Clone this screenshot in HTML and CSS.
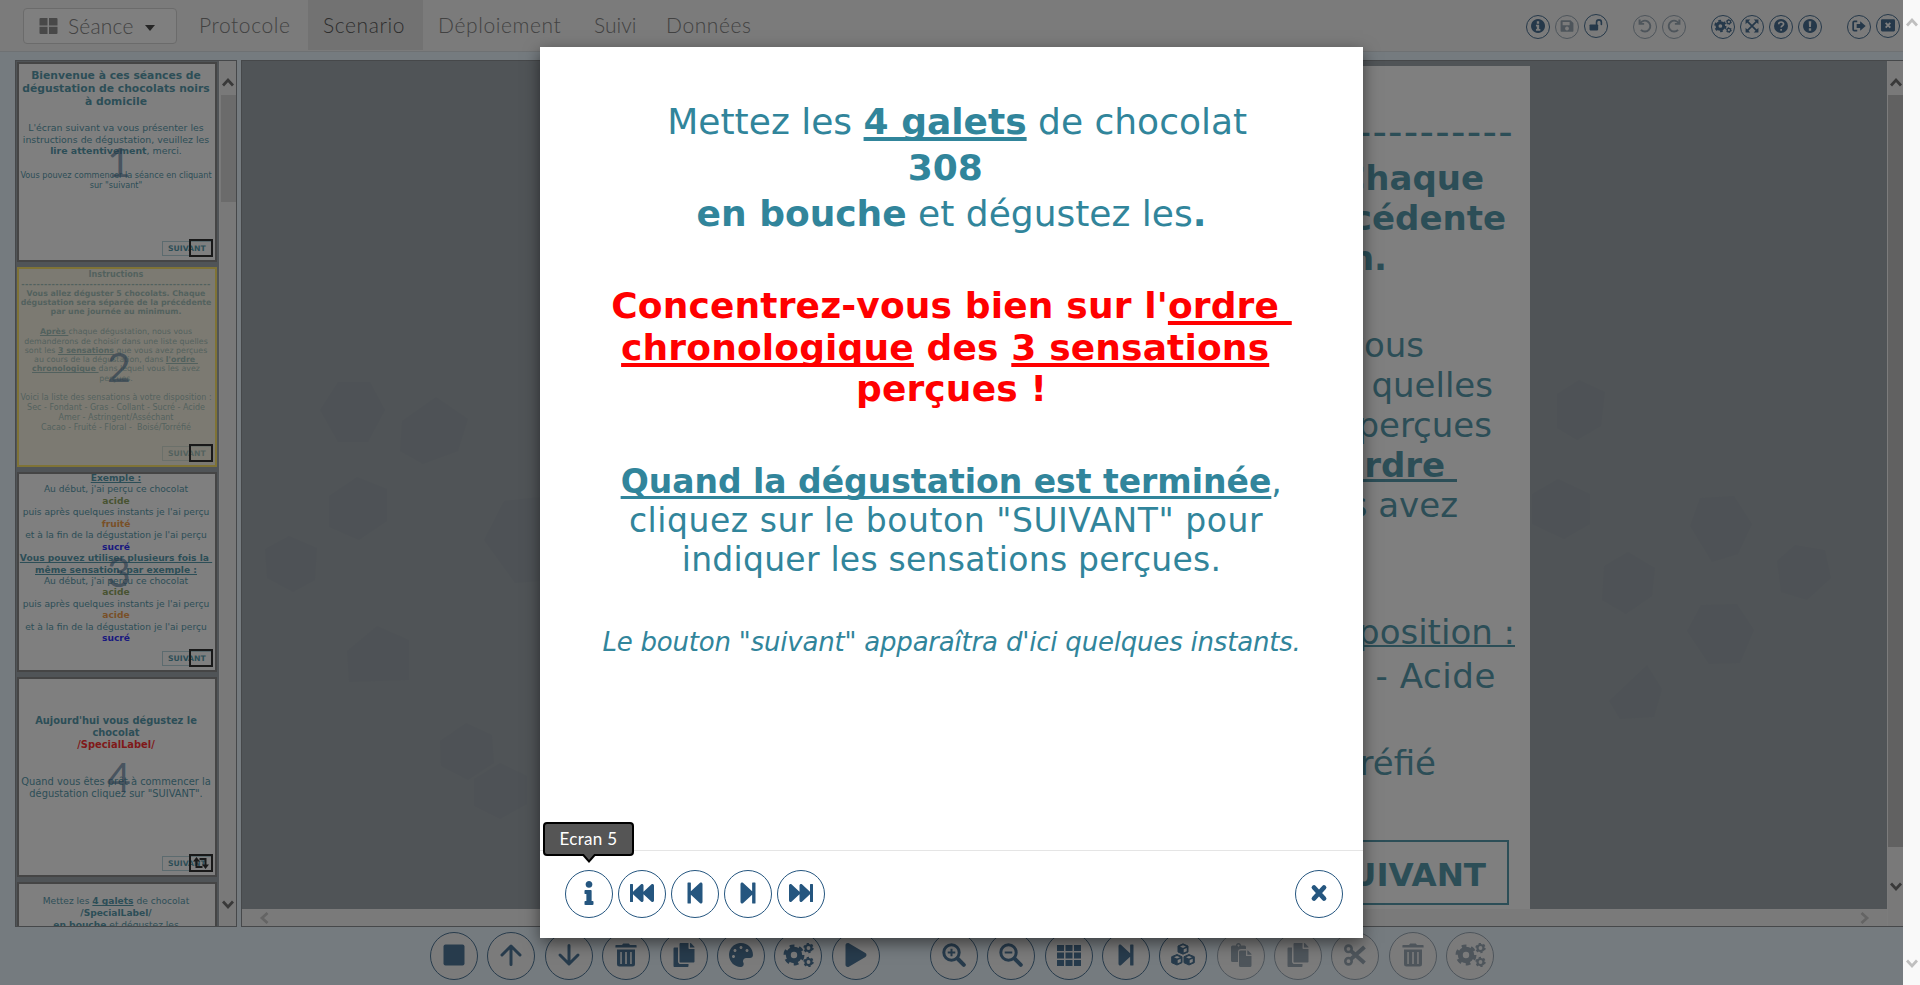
FILE: index.html
```html
<!DOCTYPE html>
<html lang="fr">
<head>
<meta charset="utf-8">
<title>Scenario</title>
<link rel="stylesheet" href="styles.css">
</head>
<body>
<svg class="sprite" aria-hidden="true">
  <symbol id="i-info" viewBox="-160 0 512 512"><path d="M20 424.229h20V279.771H20c-11.046 0-20-8.954-20-20V212c0-11.046 8.954-20 20-20h112c11.046 0 20 8.954 20 20v212.229h20c11.046 0 20 8.954 20 20V492c0 11.046-8.954 20-20 20H20c-11.046 0-20-8.954-20-20v-47.771c0-11.046 8.954-20 20-20zM96 0C56.235 0 24 32.235 24 72s32.235 72 72 72 72-32.235 72-72S135.764 0 96 0z"/></symbol>
  <symbol id="i-next" viewBox="-32 0 512 512"><path d="M384 44v424c0 6.6-5.4 12-12 12h-48c-6.6 0-12-5.4-12-12V291.600l-195.500 181C95.900 489.700 64 475.400 64 448V64c0-27.400 31.900-41.700 52.500-24.600L312 219.300V44c0-6.600 5.400-12 12-12h48c6.600 0 12 5.400 12 12z"/></symbol>
  <symbol id="i-last" viewBox="0 0 512 512"><path d="M512 76v360c0 6.600-5.400 12-12 12h-40c-6.600 0-12-5.400-12-12V284.100L276.500 440.600c-20.600 17.200-52.500 2.800-52.500-24.600V284.100L52.500 440.600C31.900 457.800 0 443.400 0 416V96c0-27.400 31.900-41.700 52.500-24.600L224 226.800V96c0-27.400 31.900-41.700 52.500-24.600L448 226.800V76c0-6.600 5.400-12 12-12h40c6.600 0 12 5.400 12 12z"/></symbol>
  <symbol id="i-close" viewBox="0 0 24 24"><path d="M7 6.500l10 11M17 6.500L7 17.500" fill="none" stroke="currentColor" stroke-width="4.800" stroke-linecap="round"/></symbol>
  <symbol id="i-stop" viewBox="0 0 24 24"><rect x="1.500" y="1.500" width="21" height="21" rx="2"/></symbol>
  <symbol id="i-up" viewBox="0 0 24 24"><path d="M12 21.500V3.500M3 12l9-9 9 9" fill="none" stroke="currentColor" stroke-width="3" stroke-linecap="round" stroke-linejoin="round"/></symbol>
  <symbol id="i-trash" viewBox="0 0 24 24"><path fill-rule="evenodd" d="M2 2h6l1.200-1.600h5.600L16 2h6a.6.600 0 0 1 .6.600v1.800H1.400V2.600A.6.600 0 0 1 2 2zM3 6.500h18V21a2.500 2.500 0 0 1-2.500 2.500h-13A2.500 2.500 0 0 1 3 21zM6.300 9v12h1.500V9zm4.900 0v12h1.600V9zm5 0v12h1.500V9z"/></symbol>
  <symbol id="i-copy" viewBox="-32 0 512 512"><path d="M320 448v40c0 13.255-10.745 24-24 24H24c-13.255 0-24-10.745-24-24V120c0-13.255 10.745-24 24-24h72v296c0 30.879 25.121 56 56 56h168zm0-344V0H152c-13.255 0-24 10.745-24 24v368c0 13.255 10.745 24 24 24h272c13.255 0 24-10.745 24-24V128H344c-13.200 0-24-10.800-24-24zm120.971-31.029L375.029 7.029A24 24 0 0 0 358.059 0H352v96h96v-6.059a24 24 0 0 0-7.029-16.970z"/></symbol>
  <symbol id="i-palette" viewBox="0 0 512 512"><path d="M204.300 5C104.900 24.400 24.800 104.300 5.200 203.400c-37 187 131.700 326.400 258.800 306.700 41.200-6.400 61.400-54.600 42.500-91.700-23.100-45.400 9.900-98.400 60.900-98.400h79.700c35.800 0 64.800-29.600 64.900-65.300C511.500 97.100 368.100-26.900 204.300 5zM96 320c-17.700 0-32-14.300-32-32s14.300-32 32-32 32 14.300 32 32-14.300 32-32 32zm32-128c-17.700 0-32-14.300-32-32s14.300-32 32-32 32 14.300 32 32-14.300 32-32 32zm128-64c-17.700 0-32-14.300-32-32s14.300-32 32-32 32 14.300 32 32-14.300 32-32 32zm128 64c-17.700 0-32-14.300-32-32s14.300-32 32-32 32 14.300 32 32-14.300 32-32 32z"/></symbol>
  <symbol id="i-cogs" viewBox="0 0 30 24"><g fill="none" stroke="currentColor">
    <circle cx="10.500" cy="12" r="5.700" stroke-width="5"/>
    <circle cx="10.500" cy="12" r="8.900" stroke-width="3.200" stroke-dasharray="4.700 4.619" stroke-dashoffset="-2.300" transform="rotate(-14 10.500 12)"/>
    <circle cx="25" cy="5" r="3" stroke-width="2.200"/><circle cx="25" cy="5" r="4.400" stroke-width="1.600" stroke-dasharray="2.300 2.307"/>
    <circle cx="25" cy="19" r="3" stroke-width="2.200"/><circle cx="25" cy="19" r="4.400" stroke-width="1.600" stroke-dasharray="2.300 2.307"/></g></symbol>
  <symbol id="i-play" viewBox="-32 0 512 512"><path d="M424.400 214.700L72.400 6.600C43.800-10.300 0 6.100 0 47.900V464c0 37.500 40.700 60.100 72.400 41.300l352-208c31.400-18.500 31.500-64.100 0-82.600z"/></symbol>
  <symbol id="i-zoomin" viewBox="0 0 24 24"><g fill="none" stroke="currentColor"><circle cx="9.500" cy="9.500" r="7.700" stroke-width="3"/><path d="M15.500 15.500l6.300 6.300" stroke-width="4" stroke-linecap="round"/><path d="M9.500 5.700v7.600M5.700 9.500h7.600" stroke-width="2"/></g></symbol>
  <symbol id="i-zoomout" viewBox="0 0 24 24"><g fill="none" stroke="currentColor"><circle cx="9.500" cy="9.500" r="7.700" stroke-width="3"/><path d="M15.500 15.500l6.300 6.300" stroke-width="4" stroke-linecap="round"/><path d="M5.700 9.500h7.600" stroke-width="2"/></g></symbol>
  <symbol id="i-grid" viewBox="0 0 24 24"><path d="M0 2h7v6H0zm8.500 0h7v6h-7zM17 2h7v6h-7zM0 9.500h7v6H0zm8.500 0h7v6h-7zm8.500 0h7v6h-7zM0 17h7v6H0zm8.500 0h7v6h-7zm8.500 0h7v6h-7z"/></symbol>
  <symbol id="i-cubes" viewBox="0 0 24 24"><g stroke="currentColor" stroke-width="1" stroke-linejoin="round"><path d="M12 .8l5 2.200v6l-5 2.200L7 9V3zM6 11.500l5 2.200v6L6 22l-5.300-2.300v-6zM18 11.500l5.300 2.200v6L18 22l-5-2.300v-6z"/></g><path class="cut" d="M12 2.300l3 1.300-3 1.300-3-1.300zM12.700 6.200l3-1.300v3.400l-3 1.300zM6 13l3 1.300-3 1.300-3-1.300zM6.700 17l3-1.300V19l-3 1.300zM18 13l3 1.300-3 1.300-3-1.300zM18.700 17l3-1.300V19l-3 1.300z"/></symbol>
  <symbol id="i-paste" viewBox="0 0 24 24"><path fill-rule="evenodd" d="M3.500 2.500H7a2.500 2.500 0 0 1 5 0h3.500A1.500 1.500 0 0 1 17 4v2h-5a3 3 0 0 0-3 3v10H3.500A1.500 1.500 0 0 1 2 17.500V4a1.500 1.500 0 0 1 1.500-1.500zM9.500 1.500a1 1 0 1 0 .01 0zM11.500 7.500H17V13h5.500v9.500a1.500 1.500 0 0 1-1.500 1.500h-9.500a1.500 1.500 0 0 1-1.500-1.500V9a1.500 1.500 0 0 1 1.500-1.500zM18.300 7.500h.7l3.500 3.500v.8h-4.200z"/></symbol>
  <symbol id="i-cut" viewBox="0 0 24 24"><g fill="none" stroke="currentColor"><circle cx="5.500" cy="5.800" r="3.200" stroke-width="2.600"/><circle cx="5.500" cy="18.200" r="3.200" stroke-width="2.600"/><path d="M8 8l13.500 12M8 16L21.500 4" stroke-width="4"/></g></symbol>
  <symbol id="i-infoc" viewBox="0 0 24 24"><path fill-rule="evenodd" d="M12 0a12 12 0 1 0 .01 0zM10 4h4v4h-4zM8.500 10H14v7h2v3H8.500v-3H10v-4H8.500z"/></symbol>
  <symbol id="i-qc" viewBox="0 0 24 24"><circle cx="12" cy="12" r="12"/><path class="cutline" d="M8 9c0-5 8.500-5 8.500-.3 0 3-4.300 2.800-4.300 6M12.200 17v3" stroke-width="2.800"/></symbol>
  <symbol id="i-exc" viewBox="0 0 24 24"><path fill-rule="evenodd" d="M12 0a12 12 0 1 0 .01 0zM9.800 4h4.400l-.6 9.500h-3.200zM10 16h4v4h-4z"/></symbol>
  <symbol id="i-save" viewBox="0 0 24 24"><path fill-rule="evenodd" d="M3 2h15l5 5v13a2 2 0 0 1-2 2H3a2 2 0 0 1-2-2V4a2 2 0 0 1 2-2zM4.500 5v5.500h12V5zM12 13a3.300 3.300 0 1 0 .01 0z"/></symbol>
  <symbol id="i-unlock" viewBox="0 0 26 24"><rect x="1" y="11" width="16" height="11" rx="1.500"/><path d="M14 11V7a4.500 4.500 0 0 1 9 0v4" fill="none" stroke="currentColor" stroke-width="3" stroke-linecap="round"/></symbol>
  <symbol id="i-undo" viewBox="0 0 24 24"><path d="M3.500 8A9.300 9.300 0 1 1 5 18.500" fill="none" stroke="currentColor" stroke-width="3.300"/><path d="M1 1v9h9.500V7H4.500V1z"/></symbol>
  <symbol id="i-expand" viewBox="0 0 24 24"><path d="M4 4l16 16M20 4L4 20" fill="none" stroke="currentColor" stroke-width="3"/><path d="M1 1h8L1 9zM23 1v8l-8-8zM1 23v-8l8 8zM23 23h-8l8-8z"/></symbol>
  <symbol id="i-out" viewBox="0 0 24 24"><path d="M9 4H4a2 2 0 0 0-2 2v12a2 2 0 0 0 2 2h5" fill="none" stroke="currentColor" stroke-width="3"/><path d="M8 8.500h6V4l9.500 8-9.500 8v-4.500H8z"/></symbol>
  <symbol id="i-xbox" viewBox="0 0 24 24"><rect x="0" y="2" width="24" height="21" rx="2"/><path class="cutline" d="M8 8.500l8 8M16 8.500l-8 8" stroke-width="3.200"/></symbol>
  <symbol id="i-squares" viewBox="0 0 18 16"><path d="M1 0h7v7.500H0V1a1 1 0 0 1 1-1zM9.500 0H17a1 1 0 0 1 1 1v6.500H9.500zM0 8.700h8V16H1a1 1 0 0 1-1-1zM9.500 8.700H18V15a1 1 0 0 1-1 1H9.500z"/></symbol>
  <symbol id="i-chev" viewBox="0 0 12 10"><path d="M1 8.500l5-5.500 5 5.500" fill="none" stroke="currentColor" stroke-width="2.800"/></symbol>
  <symbol id="i-loop" viewBox="0 0 16 12"><path d="M3.500 3v7h6M6.500 2h6v6" fill="none" stroke="currentColor" stroke-width="2"/><path d="M0 4.500L3.500 0 7 4.500zM9 7.500l3.500 4.500L16 7.500z"/></symbol>
</svg>

<div class="app">
  <header class="nav">
    <div class="dropdown"><svg class="squares"><use href="#i-squares"/></svg><span>Séance</span><i class="caret"></i></div>
    <nav class="tabs">
      <a class="tab t1">Protocole</a><a class="tab t2 active">Scenario</a><a class="tab t3">Déploiement</a><a class="tab t4">Suivi</a><a class="tab t5">Données</a>
    </nav>
    <div class="actions">
      <div class="group"><b class="mini"><svg><use href="#i-infoc"/></svg></b><b class="mini off"><svg><use href="#i-save"/></svg></b><b class="mini raised"><svg><use href="#i-unlock"/></svg></b></div>
      <div class="group"><b class="mini off"><svg><use href="#i-undo"/></svg></b><b class="mini off flip"><svg><use href="#i-undo"/></svg></b></div>
      <div class="group"><b class="mini wide"><svg><use href="#i-cogs"/></svg></b><b class="mini"><svg><use href="#i-expand"/></svg></b><b class="mini"><svg><use href="#i-qc"/></svg></b><b class="mini"><svg><use href="#i-exc"/></svg></b></div>
      <div class="group"><b class="mini"><svg><use href="#i-out"/></svg></b><b class="mini raised"><svg><use href="#i-xbox"/></svg></b></div>
    </div>
  </header>

  <main class="work">
    <aside class="side">
      <div class="thumbs">
        <section class="thumb s1">
          <p class="a"><b>Bienvenue à ces séances de<br>dégustation de chocolats noirs<br>à domicile</b></p>
          <p class="b">L'écran suivant va vous présenter les<br>instructions de dégustation, veuillez les<br><b>lire attentivement</b>, merci.</p>
          <p class="c">Vous pouvez commencer la séance en cliquant<br>sur "suivant"</p>
          <span class="num">1</span><span class="go">SUIVANT</span><span class="mark"></span>
        </section>
        <section class="thumb s2">
          <p class="a"><b>Instructions</b><br><b class="dash">--------------------------------------------------</b></p>
          <p class="b"><b>Vous allez déguster 5 chocolats. Chaque<br>dégustation sera séparée de la précédente<br>par une journée au minimum.</b></p>
          <p class="c"><b><u>Après&nbsp;</u></b>chaque dégustation, nous vous<br>demanderons de choisir dans une liste quelles<br>sont les <b><u>3 sensations</u></b> que vous avez perçues<br>au cours de la dégustation, dans <b><u>l'ordre&nbsp;</u></b><br><b><u>chronologique&nbsp;</u></b>dans lequel vous les avez<br>perçues.</p>
          <p class="d">Voici la liste des sensations à votre disposition :<br>Sec - Fondant - Gras - Collant - Sucré - Acide<br>Amer - Astringent/Asséchant<br>Cacao - Fruité - Floral -&nbsp; Boisé/Torréfié</p>
          <span class="go">SUIVANT</span><span class="veil"></span><span class="num">2</span><span class="mark"></span>
        </section>
        <section class="thumb s3">
          <p><b><u>Exemple :</u></b><br>Au début, j'ai perçu ce chocolat<br><b class="green">acide</b><br>puis après quelques instants je l'ai perçu<br><b class="orange">fruité</b><br>et à la fin de la dégustation je l'ai perçu<br><b class="blue">sucré</b><br><b><u>Vous pouvez utiliser plusieurs fois la&nbsp;</u><br><u>même sensation, par exemple :</u></b><br>Au début, j'ai perçu ce chocolat<br><b class="green">acide</b><br>puis après quelques instants je l'ai perçu<br><b class="orange">acide</b><br>et à la fin de la dégustation je l'ai perçu<br><b class="blue">sucré</b></p>
          <span class="num">3</span><span class="go">SUIVANT</span><span class="mark"></span>
        </section>
        <section class="thumb s4">
          <p class="a"><b>Aujourd'hui vous dégustez le<br>chocolat<br><span class="red">/SpecialLabel/</span></b></p>
          <p class="b">Quand vous êtes prêt à commencer la<br>dégustation cliquez sur "SUIVANT".</p>
          <span class="num">4</span><span class="go">SUIVANT</span><span class="mark"><svg><use href="#i-loop"/></svg></span>
        </section>
        <section class="thumb s5">
          <p>Mettez les <b><u>4 galets</u></b> de chocolat<br><b>/SpecialLabel/<br>en bouche</b> et dégustez les</p>
        </section>
      </div>
      <div class="vbar"><svg class="arrow up"><use href="#i-chev"/></svg><i class="grip"></i><svg class="arrow down"><use href="#i-chev"/></svg></div>
    </aside>

    <section class="stage">
      <svg class="texture" viewBox="0 0 1645 848">
        <path d="M78 349l18-28h32l15 28-17 32H96zM87 435l28-19 30 12v32l-28 19-30-13zM160 360l34-24 32 22-10 32-35 13-23-13zM242 479l20-39 36-4v84l-25 2zM23 488l24-13 28 12-2 32-22 12-26-14zM198 680l26-18 26 12 2 28-26 17-27-14zM232 718l26-16 27 13v28l-27 15-26-13zM105 590l30-25 32 14v40l-60 2z"/>
        <path d="M1315 333l22-14 26 12-4 34-24 14-20-12zM1290 433l26-15 32 15v30l-26 15-32-15zM1448 465l10-28 34-2 18 28-14 30-26 8zM1362 505l24-14 27 16-3 28-26 18-24-14zM1535 500l18-16 30 5 6 28-24 22-26-8zM1445 570l14-26 36-1 17 26-14 33-31 1zM1367 640l38-36 15 24-8 28-34 2z"/>
      </svg>
      <div class="slide">
        <p class="head"><b>Instructions</b></p>
        <p class="dashes">--------------------------------------------------</p>
        <p class="intro"><b><span class="e47">Vous allez déguster 5 chocolats. Chaque</span><span class="e25">dégustation sera séparée de la précédente</span><span class="e146">par une journée au minimum.</span></b></p>
        <p class="ask"><span class="e107"><b><u>Après&nbsp;</u></b>chaque dégustation, nous vous</span><span class="e37">demanderons de choisir dans une liste quelles</span><span class="e39">sont les <b><u>3 sensations</u></b> que vous avez perçues</span><span class="e73">au cours de la dégustation, dans <b><u>l'ordre&nbsp;</u></b></span><span class="e72"><b><u>chronologique&nbsp;</u></b>dans lequel vous les avez</span><span class="e300">perçues.</span></p>
        <p class="list"><span class="e15"><u>Voici la liste des sensations à votre disposition :</u></span><span class="e35">Sec - Fondant - Gras - Collant - Sucré - Acide</span><span class="e180">Amer - Astringent/Asséchant</span><span class="e95">Cacao - Fruité - Floral -&nbsp; Boisé/Torréfié</span></p>
        <div class="next">SUIVANT</div>
      </div>
      <div class="hbar"><svg class="arrow left"><use href="#i-chev"/></svg><svg class="arrow right"><use href="#i-chev"/></svg></div>
      <div class="vbar big"><svg class="arrow up"><use href="#i-chev"/></svg><i class="grip"></i><svg class="arrow down"><use href="#i-chev"/></svg></div>
    </section>
  </main>

  <footer class="tools">
    <div class="set">
      <b class="round"><svg><use href="#i-stop"/></svg></b><b class="round"><svg><use href="#i-up"/></svg></b><b class="round turn"><svg><use href="#i-up"/></svg></b><b class="round"><svg><use href="#i-trash"/></svg></b><b class="round"><svg><use href="#i-copy"/></svg></b><b class="round"><svg><use href="#i-palette"/></svg></b><b class="round wide"><svg><use href="#i-cogs"/></svg></b><b class="round"><svg><use href="#i-play"/></svg></b>
    </div>
    <div class="set">
      <b class="round"><svg><use href="#i-zoomin"/></svg></b><b class="round"><svg><use href="#i-zoomout"/></svg></b><b class="round"><svg><use href="#i-grid"/></svg></b><b class="round"><svg><use href="#i-next"/></svg></b><b class="round"><svg><use href="#i-cubes"/></svg></b><b class="round off"><svg><use href="#i-paste"/></svg></b><b class="round off"><svg><use href="#i-copy"/></svg></b><b class="round off"><svg><use href="#i-cut"/></svg></b><b class="round off"><svg><use href="#i-trash"/></svg></b><b class="round off wide"><svg><use href="#i-cogs"/></svg></b>
    </div>
  </footer>

  <div class="overlay"></div>

  <div class="modal">
    <div class="body">
      <p class="lead">&nbsp;Mettez les <b><u>4 galets</u></b> de chocolat<br><b>308&nbsp;</b><br><b>en bouche</b> et dégustez les<b>.</b></p>
      <p class="warn">Concentrez-vous bien sur l'<u>ordre&nbsp;</u><br><u>chronologique</u> des <u>3 sensations</u>&nbsp;<br>perçues !</p>
      <p class="done"><b><u>Quand la dégustation est terminée</u></b>,<br>cliquez sur le bouton "SUIVANT" pour&nbsp;<br><span class="tight">indiquer les sensations perçues.</span></p>
      <p class="hint">Le bouton "suivant" apparaîtra d'ici quelques instants.</p>
    </div>
    <div class="foot">
      <b class="round">
        <svg><use href="#i-info"/></svg>
        <span class="tip">Ecran 5</span>
      </b>
      <b class="round back"><svg><use href="#i-last"/></svg></b><b class="round back"><svg><use href="#i-next"/></svg></b><b class="round"><svg><use href="#i-next"/></svg></b><b class="round"><svg><use href="#i-last"/></svg></b>
      <b class="round last"><svg><use href="#i-close"/></svg></b>
    </div>
  </div>
</div>
<div class="pagebar"><svg class="arrow up"><use href="#i-chev"/></svg><svg class="arrow down"><use href="#i-chev"/></svg></div>
</body>
</html>
```
FILE: styles.css
```css
* { box-sizing: border-box; }
body { margin: 0; width: 1920px; height: 985px; overflow: hidden; display: flex; background: #fff; font-family: "DejaVu Sans", sans-serif; color: #31859b; }
p { margin: 0; }
svg { display: block; fill: currentColor; overflow: visible; }
.sprite { position: absolute; width: 0; height: 0; }
.cut { fill: #fff; }
.cutline { fill: none; stroke: #fff; }
u { text-decoration-skip-ink: none; }

.app { position: relative; width: 1903px; height: 985px; display: flex; flex-direction: column; background: #e6f4ff; overflow: hidden; }
.overlay { position: absolute; inset: 0; background: rgba(41, 41, 41, .6); }

/* top navigation */
.nav { height: 52px; display: flex; background: #f5f5f5; border-bottom: 1px solid #d4dce2; font-family: Lato, sans-serif; font-size: 21px; color: #666; }
.dropdown { width: 154px; height: 36px; margin: 8px 7px 0 23px; padding-left: 15px; display: flex; align-items: center; background: #fff; border: 1px solid #ccc; border-radius: 4px; letter-spacing: .2px; font-size: 21px; font-weight: 300; }
.squares { width: 19px; height: 16px; margin-right: 10px; color: #777; }
.dropdown span, .tab { position: relative; top: -1px; }
.caret { margin: 3px 0 0 11px; border: 5px solid transparent; border-top: 6px solid #222; border-bottom: 0; }
.tabs { display: flex; height: 50px; }
.tab { top: 0; padding-left: 15px; line-height: 49px; letter-spacing: .6px; font-weight: 300; }
.tab.active { background: #dfdfdf; color: #333; }
.t1 { width: 124px; }
.t2 { width: 115px; }
.t3 { width: 156px; }
.t4 { width: 72px; letter-spacing: 0; }
.t5 { width: 116px; }
.actions { margin-left: auto; padding-right: 3px; display: flex; gap: 25px; height: 54px; color: #1f4f7a; }
.group { display: flex; align-items: center; gap: 5px; }
.mini { width: 24px; height: 24px; border: 1px solid currentColor; border-radius: 50%; display: flex; align-items: center; justify-content: center; }
.mini svg { width: 14px; height: 14px; margin-top: -2px; }
.mini.wide svg { width: 18px; flex: none; }
.mini.raised { margin-bottom: 2px; }
.mini.off, .round.off { color: #8496a6; }
.flip svg { transform: scaleX(-1); }

/* work area */
.work { height: 867px; margin-top: 8px; padding-left: 15px; display: flex; gap: 4px; }
.side { width: 222px; display: flex; background: #8a949c; border: 1px solid #70757a; overflow: hidden; }
.thumbs { width: 203px; height: 865px; padding: 1px 0 0 1px; display: flex; flex-direction: column; gap: 5px; overflow: hidden; }
.thumb { position: relative; flex: none; width: 200px; height: 200px; background: #fff; border: 2px solid #6f6f6f; text-align: center; white-space: nowrap; overflow: hidden; }
.thumb p { margin-left: -11px; margin-right: -9px; }
.s1 .a { margin-top: 5px; font-size: 10.75px; line-height: 13px; }
.s1 .b { margin-top: 14px; font-size: 9.4px; line-height: 11.6px; }
.s1 .c { margin-top: 13px; font-size: 8.15px; line-height: 10px; }
.s2 { border-color: #ffe14a; }
.s2 .a { margin-top: 0; font-size: 8.1px; line-height: 10px; }
.s2 .dash { letter-spacing: .43px; }
.s2 .b { font-size: 7.85px; line-height: 9.1px; }
.s2 .c { margin-top: 11px; font-size: 7.9px; line-height: 9.25px; }
.s2 .d { margin-top: 10px; font-size: 8px; line-height: 10px; }
.s3 p { margin-top: -1px; font-size: 9.15px; line-height: 11.43px; }
.s4 .a { margin-top: 36px; font-size: 9.9px; line-height: 12px; }
.s4 .b { margin-top: 25px; font-size: 9.9px; line-height: 12px; }
.s5 p { margin-top: 11px; font-size: 9.1px; line-height: 12px; }
.green { color: #76923c; }
.orange { color: #f08a24; }
.blue { color: #0000ff; }
.red { color: #ff0000; }
.num { position: absolute; left: 0; right: 0; top: 73px; padding-left: 4px; text-align: center; font: 41px/50px Lato, sans-serif; color: rgba(37, 86, 127, .65); }
.go { position: absolute; left: 143px; top: 177px; width: 51px; height: 15px; padding-left: 5px; border: 1px solid #a9cdd6; background: #fff; font-size: 7.7px; line-height: 14px; font-weight: bold; text-align: left; }
.mark { position: absolute; left: 170px; top: 175px; width: 24px; height: 18px; border: 2px solid #000; color: #000; }
.mark svg { width: 16px; height: 12px; margin: 1px 2px; }
.veil { position: absolute; inset: 0; background: rgba(240, 230, 190, .5); }

.vbar { width: 17px; display: flex; flex-direction: column; align-items: center; background: #f0f0f0; border-left: 1px solid #f8f8f8; }
.arrow { width: 12px; height: 10px; color: #505050; }
.down { transform: rotate(180deg); }
.side .up { margin-top: 16px; }
.side .grip { width: 15px; height: 107px; margin-top: 8px; background: #cdcdcd; }
.side .down { margin-top: auto; margin-bottom: 16px; }

.stage { position: relative; width: 1662px; display: grid; grid-template-columns: 1fr 16px; grid-template-rows: 848px 17px; background: #8a949c; border: 1px solid #70757a; border-right: 0; overflow: hidden; }
.texture { position: absolute; left: 0; top: 0; width: 1645px; height: 848px; color: rgba(60, 90, 110, .06); }
.slide { position: relative; grid-column: 1; grid-row: 1; width: 823px; height: 843px; margin: 5px 0 0 465px; background: #fff; font-size: 34px; line-height: 40px; white-space: nowrap; overflow: hidden; text-align: right; }
.slide u { text-decoration-thickness: 2px; }
.slide b u { text-decoration-thickness: 3px; }
.slide span { display: flex; justify-content: flex-end; white-space: pre; }
.head { margin-top: 6px; text-align: center; }
.dashes { padding-right: 16px; font-size: 40px; letter-spacing: 1.3px; }
.intro { margin-top: 6px; }
.ask { margin-top: 47px; }
.list { margin-top: 46px; line-height: 43.8px; }
.e15 { margin-right: 15px; }
.e25 { margin-right: 24px; }
.e35 { margin-right: 34px; letter-spacing: .6px; }
.e37 { margin-right: 37px; }
.e39 { margin-right: 38px; }
.e47 { margin-right: 46px; }
.e72 { margin-right: 72px; }
.e73 { margin-right: 73px; }
.e95 { margin-right: 94px; }
.e107 { margin-right: 106px; }
.e146 { margin-right: 143px; }
.e180 { margin-right: 180px; }
.e300 { margin-right: 300px; }
.next { width: 206px; height: 65px; margin: 54px 21px 0 auto; padding-right: 21px; border: 2px solid #31859b; font-size: 32.5px; font-weight: bold; line-height: 67px; }
.hbar { grid-column: 1; grid-row: 2; display: flex; justify-content: space-between; align-items: center; padding: 0 16px; background: #f3f3f3; }
.hbar .arrow { color: #bbb; }
.left { transform: rotate(-90deg); }
.right { transform: rotate(90deg); }
.vbar.big { grid-column: 2; grid-row: 1 / 3; width: 16px; }
.big .up { margin-top: 16px; }
.big .grip { width: 15px; height: 752px; margin-top: 8px; background: #b4b4b4; }
.big .down { margin-top: 35px; }

/* bottom toolbar */
.tools { display: flex; gap: 50px; padding: 5px 0 0 430px; color: #25567f; }
.set { display: flex; gap: 9.4px; }
.round { position: relative; flex: none; width: 48px; height: 48px; border: 1px solid currentColor; border-radius: 50%; display: flex; align-items: center; justify-content: center; background: #fff; }
.round svg { width: 24px; height: 24px; margin-top: -2px; }
.round.wide svg { width: 31px; flex: none; }
.tools .round { background: #f6f6f6; }
.turn svg { transform: rotate(180deg); }

/* preview dialog */
.modal { position: absolute; left: 540px; top: 47px; width: 823px; height: 891px; background: #fff; box-shadow: 0 5px 15px rgba(0, 0, 0, .5); display: flex; flex-direction: column; }
.body { height: 803px; text-align: center; white-space: nowrap; }
.body u { text-decoration-thickness: 4px; text-underline-offset: 3px; }
.lead { margin-top: 52px; font-size: 36px; line-height: 46px; }
.warn { margin-top: 48px; font-size: 36px; line-height: 41.500px; letter-spacing: .15px; font-weight: bold; color: #f00; }
.done { margin-top: 52px; font-size: 33px; line-height: 39px; letter-spacing: .55px; }
.done b { letter-spacing: 0; }
.done u { text-decoration-thickness: 3px; }
.tight { letter-spacing: .25px; }
.hint { margin-top: 47px; font-size: 26px; line-height: 32px; font-style: italic; letter-spacing: -.2px; }
.foot { flex: 1; padding: 19px 20px 0 25px; border-top: 1px solid #e5e5e5; display: flex; gap: 5px; color: #25567f; }
.back svg { transform: scaleX(-1); }
.last { margin-left: auto; }
.tip { position: absolute; left: -23px; top: -49px; width: 91px; height: 34px; border: 2px solid #000; border-radius: 4px; background: #555; color: #fff; font: 17px/30px Lato, sans-serif; letter-spacing: .3px; text-align: center; }
.tip::before, .tip::after { content: ""; position: absolute; left: 36px; top: 30px; border: 8px solid transparent; border-top: 9px solid #000; border-bottom: 0; }
.tip::after { left: 38px; top: 29px; border-width: 7px 6px 0; border-top-color: #555; }

.pagebar { width: 17px; height: 985px; padding: 17px 0 16px; display: flex; flex-direction: column; justify-content: space-between; align-items: center; background: #f9f9f9; }
.pagebar .arrow { color: #bfbfbf; }
```
